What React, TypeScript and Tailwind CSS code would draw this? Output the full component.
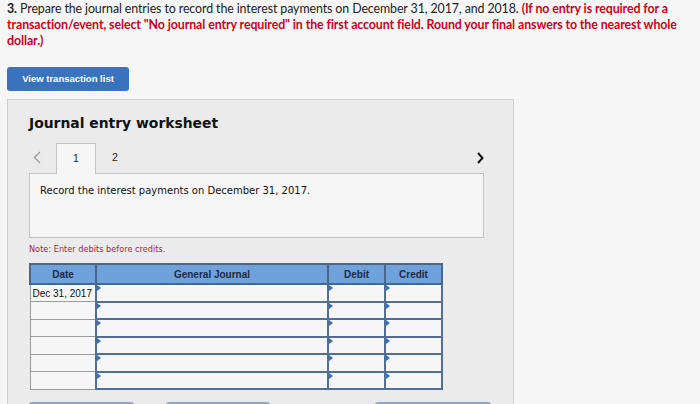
import React from "react";

const ROWS = ["Dec 31, 2017", "", "", "", "", ""];

function Marker() {
  return (
    <span className="absolute left-0 top-0 w-0 h-0 border-t-[3px] border-b-[3px] border-l-[4px] border-t-transparent border-b-transparent border-l-[#2f6fc4]" />
  );
}

export default function App() {
  return (
    <div className="w-[700px] h-[404px] overflow-hidden bg-[#f6f6f6] text-[#222]">
      {/* Question */}
      <p className="px-[7px] pt-[1px] text-[12.4px] leading-[16px] font-['Lato',sans-serif] tracking-[-0.1px]">
        <b>3.</b> Prepare the journal entries to record the interest payments on December 31, 2017, and 2018.{" "}
        <b className="text-[#d0021b]">
          (If no entry is required for a transaction/event, select "No journal entry required" in the first
          account field. Round your final answers to the nearest whole dollar.)
        </b>
      </p>

      <button className="ml-[7px] mt-[18px] w-[122px] h-[24px] rounded-[3px] bg-[#3a72bd] text-white text-[9.5px] font-bold font-['Liberation_Sans',Arial,sans-serif]">
        View transaction list
      </button>

      {/* Worksheet panel */}
      <div className="ml-[7px] mt-[8px] w-[507px] h-[320px] border border-[#cfcfcf] bg-[#ebebeb] px-[21px] pt-[13px]">
        <h2 className="text-[13.9px] leading-[20px] font-bold font-['DejaVu_Sans',Verdana,sans-serif] text-[#111]">
          Journal entry worksheet
        </h2>

        {/* Tabs */}
        <div className="mt-[10px] flex items-end h-[30px] w-[455px] font-['Liberation_Sans',Arial,sans-serif] text-[10.5px]">
          <span className="w-[27px] pl-[4px] pb-[9px]">
            <svg width="8" height="13" viewBox="0 0 8 13" fill="none">
              <path d="M7 1L1.5 6.5L7 12" stroke="#9a9a9a" strokeWidth="1.3" />
            </svg>
          </span>
          <div className="relative z-10 -mb-px w-[40px] h-[31px] border border-b-0 border-[#c4c4c4] bg-[#f6f6f6] flex items-center justify-center">
            1
          </div>
          <div className="w-[38px] h-[30px] flex items-center justify-center">2</div>
          <div className="flex-1" />
          <span className="pb-[9px]">
            <svg width="7" height="12" viewBox="0 0 7 12" fill="none">
              <path d="M1 1L5.5 6L1 11" stroke="#111" strokeWidth="2" />
            </svg>
          </span>
        </div>

        <div className="w-[455px] h-[65px] border border-[#c4c4c4] bg-[#f6f6f6] px-[10px] pt-[9px] text-[10px] font-['DejaVu_Sans',Verdana,sans-serif] text-[#111]">
          Record the interest payments on December 31, 2017.
        </div>

        <p className="mt-[5px] text-[8.2px] leading-[12px] font-['DejaVu_Sans',Verdana,sans-serif] text-[#b3233a]">
          Note: Enter debits before credits.
        </p>

        <table className="mt-[8px] border-collapse table-fixed w-[412px] font-['Liberation_Sans',Arial,sans-serif]">
          <colgroup>
            <col className="w-[66px]" />
            <col className="w-[232px]" />
            <col className="w-[57px]" />
            <col className="w-[57px]" />
          </colgroup>
          <thead>
            <tr className="h-[20px] bg-[#6fa1dc] text-[10px] font-bold text-[#1b2b45]">
              <th className="border-2 border-[#47678f] p-0">Date</th>
              <th className="border-2 border-[#47678f] p-0">General Journal</th>
              <th className="border-2 border-[#47678f] p-0">Debit</th>
              <th className="border-2 border-[#47678f] p-0">Credit</th>
            </tr>
          </thead>
          <tbody>
            {ROWS.map((d, i) => (
              <tr key={i} className="h-[17.5px]">
                <td className="border border-[#9a9a9a] bg-[#f6f6f6] p-0 pl-[2px] text-[10px] text-[#111] whitespace-nowrap overflow-hidden">
                  {d}
                </td>
                <td className="relative border-2 border-[#516f95] bg-[#f6f6f6] p-0">
                  <Marker />
                </td>
                <td className="relative border-2 border-[#516f95] bg-[#f6f6f6] p-0">
                  <Marker />
                </td>
                <td className="relative border-2 border-[#516f95] bg-[#f6f6f6] p-0">
                  <Marker />
                </td>
              </tr>
            ))}
          </tbody>
        </table>

        {/* Action buttons (cut off at the bottom) */}
        <div className="mt-[12px] flex">
          <div className="w-[105px] h-[24px] rounded-[3px] border-t-2 border-[#8aa6cc] bg-[#3a72bd]" />
          <div className="ml-[32px] w-[104px] h-[24px] rounded-[3px] border-t-2 border-[#8aa6cc] bg-[#3a72bd]" />
          <div className="ml-[105px] w-[116px] h-[24px] rounded-[3px] border-t-2 border-[#8aa6cc] bg-[#3a72bd]" />
        </div>
      </div>
    </div>
  );
}
